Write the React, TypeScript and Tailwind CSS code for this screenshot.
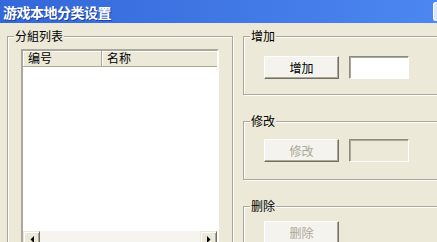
import React from 'react';

const font = { fontFamily: '"Noto Sans CJK SC", "Liberation Sans", sans-serif' };

function XpButton({ label, disabled }: { label: string; disabled?: boolean }) {
  return (
    <button
      className={`w-[75px] h-[23px] shrink-0 bg-[#f4f3ee] border border-t-white border-l-white border-r-[#716f64] border-b-[#716f64] shadow-[inset_-1px_-1px_0_#aca899] text-[12px] leading-[14px] ${
        disabled ? 'text-[#aca899]' : 'text-black'
      }`}
    >
      {label}
    </button>
  );
}

function TextBox({ disabled }: { disabled?: boolean }) {
  return (
    <div
      className={`w-[60px] h-[23px] shrink-0 border border-t-[#8e8c7e] border-l-[#8e8c7e] border-r-white border-b-white shadow-[inset_1px_1px_0_#aca899] ${
        disabled ? 'bg-[#ece9d8]' : 'bg-white'
      }`}
    />
  );
}

function Group({ title, children, className }: { title: string; children?: React.ReactNode; className?: string }) {
  return (
    <fieldset
      className={`border border-[#aca899] shadow-[inset_1px_1px_0_#fff,1px_1px_0_#fff] ${className ?? ''}`}
    >
      <legend className="ml-[6px] px-[1px] bg-[#ece9d8] text-[12px] leading-[14px] text-black">{title}</legend>
      {children}
    </fieldset>
  );
}

function Arrow({ dir }: { dir: 'left' | 'right' }) {
  return (
    <svg width="4" height="7" viewBox="0 0 4 7">
      {dir === 'left' ? <polygon points="4,0 4,7 0.5,3.5" fill="#000" /> : <polygon points="0,0 0,7 3.5,3.5" fill="#000" />}
    </svg>
  );
}

function ScrollButton({ dir }: { dir: 'left' | 'right' }) {
  return (
    <div className="w-[17px] h-[17px] shrink-0 flex items-center justify-center bg-[#ece9d8] border border-t-[#ece9d8] border-l-[#ece9d8] border-r-[#716f64] border-b-[#716f64] shadow-[inset_1px_1px_0_#fff,inset_-1px_-1px_0_#aca899]">
      <Arrow dir={dir} />
    </div>
  );
}

export default function App() {
  return (
    <div className="w-[437px] h-[242px] overflow-hidden flex flex-col bg-[#ece9d8]" style={font}>
      {/* Title bar */}
      <div className="h-[23px] shrink-0 flex items-center pl-[3px] bg-gradient-to-r from-[#3467d8] to-[#4c87f1]">
        <span className="text-white font-bold text-[14px] leading-[16px] tracking-[-0.5px] [text-shadow:1px_1px_0_#1c3f9e]">
          游戏本地分类设置
        </span>
        <div className="ml-auto w-[4px] h-[19px] rounded-l-[3px] border-l border-t border-b border-white bg-[#dbe6fb]" />
      </div>

      <div className="flex items-start">
        {/* Left: list group */}
        <Group title="分組列表" className="ml-[7px] mt-[6px] w-[226px] h-[240px] shrink-0">
          <div className="ml-[13px] mt-[6px] w-[198px] h-[200px] flex flex-col border-2 border-t-[#aca899] border-l-[#aca899] border-r-white border-b-white">
            <div className="flex h-[16px] shrink-0 text-[12px] leading-[14px] text-black">
              <div className="w-[79px] pl-[5px] bg-[#ece9d8] border-r border-b border-[#aca899] shadow-[inset_1px_1px_0_#fff]">编号</div>
              <div className="flex-1 pl-[5px] bg-[#ece9d8] border-b border-[#aca899] shadow-[inset_1px_1px_0_#fff]">名称</div>
            </div>
            <div className="h-[164px] shrink-0 bg-white" />
            <div className="flex h-[17px] shrink-0">
              <ScrollButton dir="left" />
              <div className="flex-1 bg-[#f5f4ee]" />
              <ScrollButton dir="right" />
            </div>
          </div>
        </Group>

        {/* Right: action groups */}
        <div className="ml-[10px] mt-[6px] w-[200px] shrink-0 flex flex-col gap-[19px]">
          <Group title="增加" className="h-[66px]">
            <div className="flex gap-[10px] ml-[20px] mt-[13px]">
              <XpButton label="增加" />
              <TextBox />
            </div>
          </Group>
          <Group title="修改" className="h-[66px]">
            <div className="flex gap-[10px] ml-[20px] mt-[11px]">
              <XpButton label="修改" disabled />
              <TextBox disabled />
            </div>
          </Group>
          <Group title="删除" className="h-[66px]">
            <div className="flex gap-[10px] ml-[20px] mt-[8px]">
              <XpButton label="删除" disabled />
            </div>
          </Group>
        </div>
      </div>
    </div>
  );
}
